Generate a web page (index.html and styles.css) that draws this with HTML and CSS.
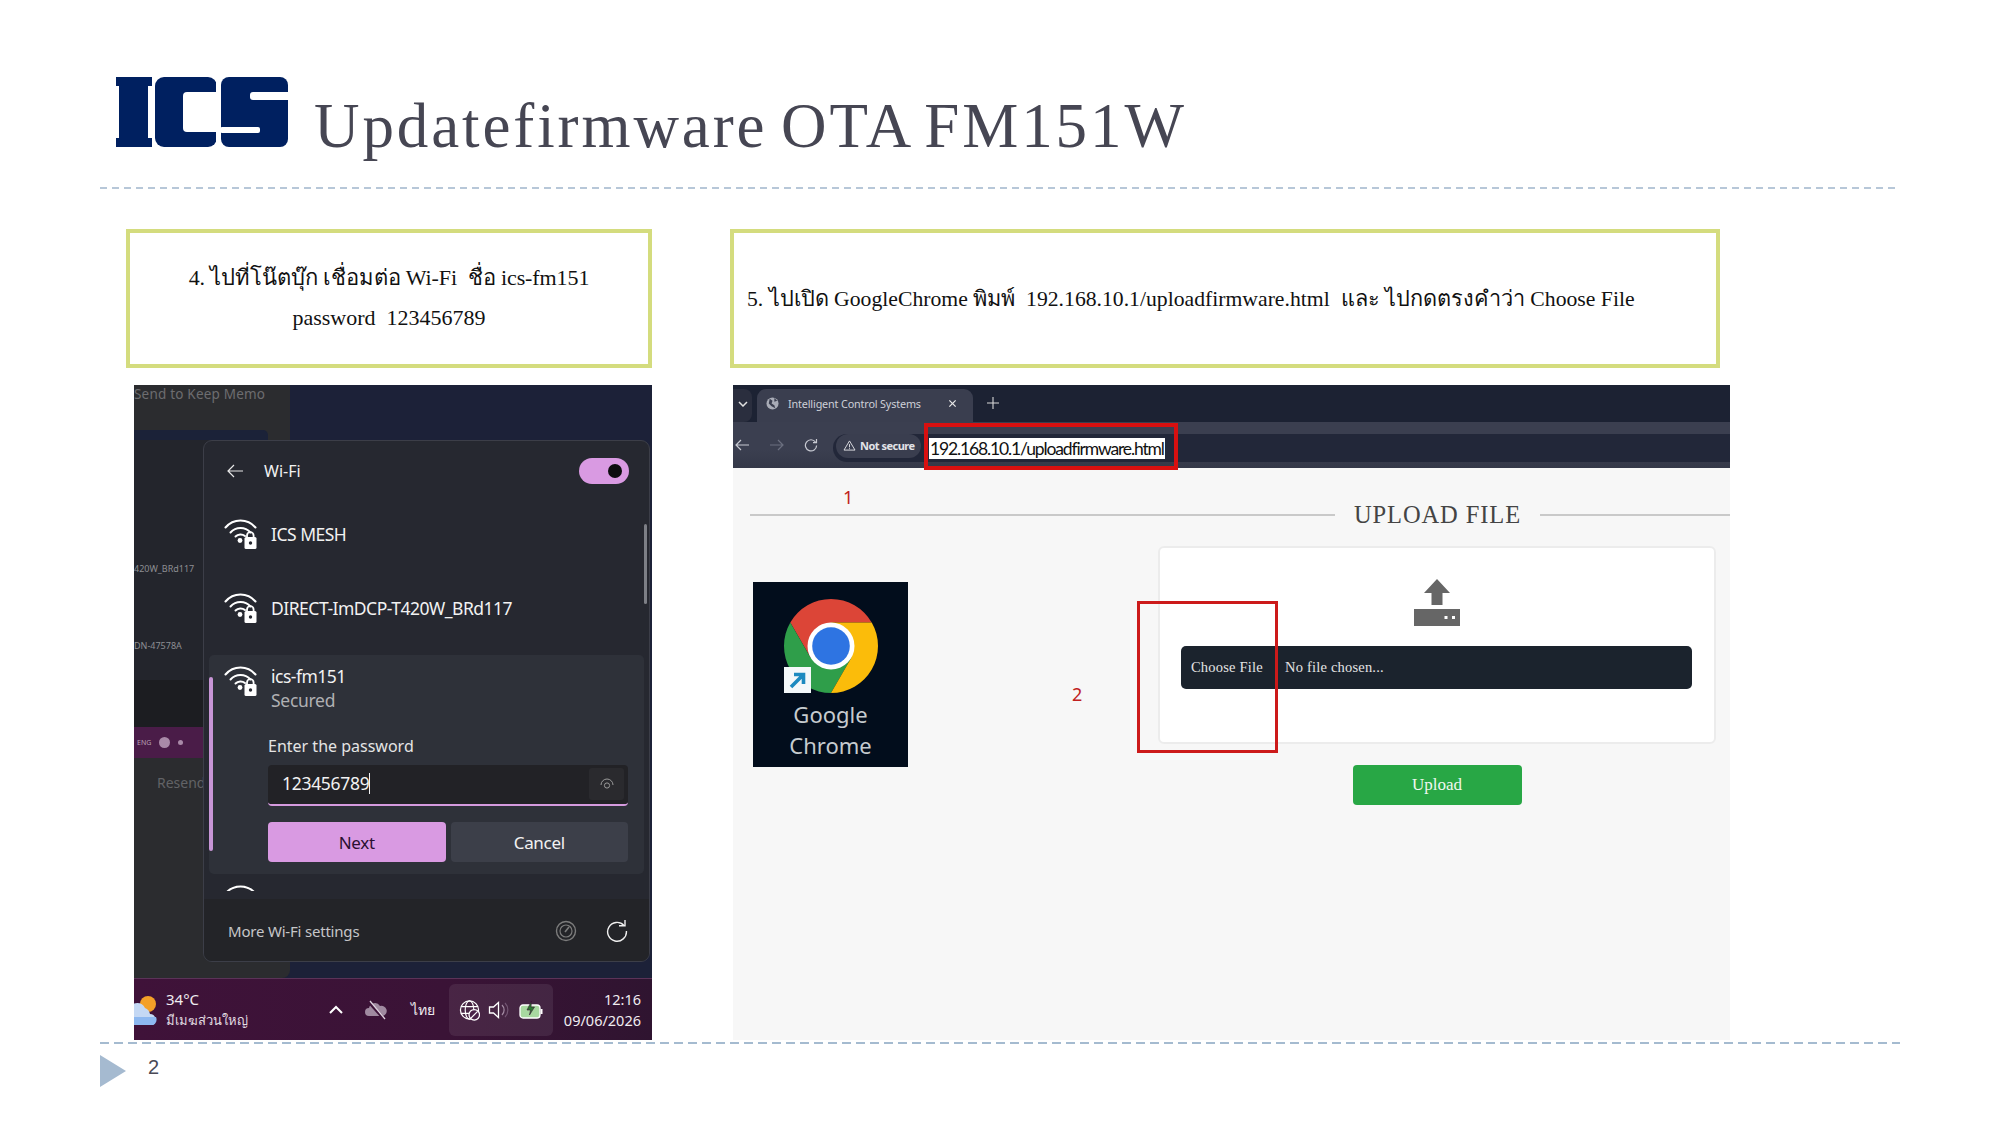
FILE: index.html
```html
<!DOCTYPE html>
<html lang="th">
<head>
  <meta charset="UTF-8" />
  <title>Updatefirmware OTA FM151W</title>
  <link rel="stylesheet" href="styles.css">
</head>
<body>
  <div class="slide">
    <div class="title-row">
      <svg class="logo" viewBox="0 0 172 70" role="img" aria-label="ICS logo">
        <rect x="0" y="0" width="36" height="9" fill="#002060"/>
        <rect x="3" y="5" width="29" height="60" fill="#002060"/>
        <rect x="0" y="61" width="36" height="9" fill="#002060"/>
        <rect x="39" y="0" width="62" height="70" rx="9" fill="#002060"/>
        <rect x="67" y="15" width="40" height="40" rx="4" fill="#fff"/>
        <rect x="105" y="0" width="67" height="70" rx="8" fill="#002060"/>
        <rect x="100" y="-1" width="5" height="72" fill="#fff"/>
        <rect x="134" y="15" width="40" height="8" rx="3" fill="#fff"/>
        <rect x="104" y="50" width="40" height="6" rx="2" fill="#fff"/>
      </svg>
      <h1 class="title">Updatefirmware OTA FM151W</h1>
    </div>
    <div class="rule rule-top"></div>

    <div class="columns">
      <section class="col-left">
        <div class="note note-left">
          <p>4. ไปที่โน๊ตบุ๊ก เชื่อมต่อ Wi-Fi &nbsp;ชื่อ ics-fm151</p>
          <p>password &nbsp;123456789</p>
        </div>

        <div class="shot shot-wifi">
          <div class="desk-side">
            <div class="memo">Send to Keep Memo<span class="memo-tab"></span></div>
            <div class="side-list">
              <span class="side-label side-label-a">420W_BRd117</span>
              <span class="side-label side-label-b">DN-47578A</span>
            </div>
            <div class="side-dark"></div>
            <div class="side-strip"><span class="side-eng">ENG</span><span class="side-dot"></span><span class="side-dot2"></span></div>
            <div class="side-resend">Resend</div>
          </div>

          <div class="wifi-panel">
            <div class="panel-head">
              <svg class="back" viewBox="0 0 16 14"><path d="M7 1 1 7l6 6M1 7h15" fill="none" stroke="#e8e8e8" stroke-width="1.2"/></svg>
              <span class="panel-title">Wi-Fi</span>
              <span class="toggle"><span class="knob"></span></span>
            </div>
            <span class="scroll-thumb"></span>

            <div class="net-row">
              <svg class="wifi-ico" viewBox="0 0 33 30"><use href="#wifi-lock"/></svg>
              <span class="net-name">ICS MESH</span>
            </div>
            <div class="net-row">
              <svg class="wifi-ico" viewBox="0 0 33 30"><use href="#wifi-lock"/></svg>
              <span class="net-name">DIRECT-ImDCP-T420W_BRd117</span>
            </div>

            <div class="net-open">
              <span class="accent"></span>
              <div class="net-open-head">
                <svg class="wifi-ico" viewBox="0 0 33 30"><use href="#wifi-lock"/></svg>
                <div>
                  <div class="net-name">ics-fm151</div>
                  <div class="net-sub">Secured</div>
                </div>
              </div>
              <div class="pw-block">
                <div class="pw-label">Enter the password</div>
                <div class="pw-input">
                  <span class="pw-value">123456789</span>
                  <span class="pw-eye">
                    <svg viewBox="0 0 14 12"><path d="M1 7a6 6 0 0 1 12 0" fill="none" stroke="#9a9a9a" stroke-width="1"/><circle cx="7" cy="7.5" r="2.6" fill="none" stroke="#9a9a9a" stroke-width="1"/></svg>
                  </span>
                </div>
                <div class="pw-buttons">
                  <span class="btn-next">Next</span>
                  <span class="btn-cancel">Cancel</span>
                </div>
              </div>
            </div>

            <div class="net-peek">
              <svg class="wifi-ico" viewBox="0 0 33 30"><use href="#wifi-lock"/></svg>
            </div>

            <div class="panel-foot">
              <span class="foot-link">More Wi-Fi settings</span>
              <svg class="gauge" viewBox="0 0 22 22"><circle cx="11" cy="11" r="9.5" fill="none" stroke="#7c7c7c" stroke-width="1.4"/><circle cx="11" cy="11" r="6" fill="none" stroke="#7c7c7c" stroke-width="1.2"/><path d="M10 12l4-5" stroke="#7c7c7c" stroke-width="1.6"/></svg>
              <svg class="refresh" viewBox="0 0 22 22"><path d="M18 5.5A9.4 9.4 0 1 0 20.4 11" fill="none" stroke="#f0f0f0" stroke-width="1.4"/><path d="M13 5.8h6V0" fill="none" stroke="#f0f0f0" stroke-width="1.4"/></svg>
            </div>
          </div>

          <div class="taskbar">
            <svg class="weather" viewBox="0 0 24 34"><circle cx="14" cy="11" r="8" fill="#f4a028"/><path d="M-6 32a7 7 0 0 1 0-14 9 9 0 0 1 17-3 8 8 0 0 1 5 6 6 6 0 0 1 3 11z" fill="#c4d8f4"/><path d="M-6 32h25a6 6 0 0 0 3-8H-6z" fill="#8db8f0"/></svg>
            <div class="weather-text">
              <div class="temp">34°C</div>
              <div class="sky">มีเมฆส่วนใหญ่</div>
            </div>
            <svg class="chev" viewBox="0 0 14 9"><path d="M1 8l6-6 6 6" fill="none" stroke="#fff" stroke-width="2"/></svg>
            <svg class="cloud-off" viewBox="0 0 22 20"><path d="M4 16a4 4 0 0 1 0-8 6 6 0 0 1 11-2 5 5 0 0 1 3 10z" fill="#a08aa0"/><path d="M3 1l16 18" stroke="#3d1238" stroke-width="3"/><path d="M5 1l15 18" stroke="#e0d4e0" stroke-width="1.3"/></svg>
            <span class="lang">ไทย</span>
            <div class="tray">
              <svg class="globe" viewBox="0 0 22 22"><circle cx="11" cy="11" r="9.5" fill="none" stroke="#fff" stroke-width="1.3"/><ellipse cx="11" cy="11" rx="4.5" ry="9.5" fill="none" stroke="#fff" stroke-width="1.2"/><path d="M2 7.5h18M2 14.5h12" stroke="#fff" stroke-width="1.2"/><circle cx="16" cy="16" r="5.5" fill="#4a2348" stroke="#fff" stroke-width="1.3"/><path d="M12.5 19.5l7-7" stroke="#fff" stroke-width="1.3"/></svg>
              <svg class="speaker" viewBox="0 0 22 20"><path d="M1.5 7v6h4l5 4.5v-15l-5 4.5z" fill="none" stroke="#fff" stroke-width="1.3"/><path d="M14 5a7 7 0 0 1 0 10" fill="none" stroke="#a48ca4" stroke-width="1.2"/><path d="M17 3a10 10 0 0 1 0 14" fill="none" stroke="#735673" stroke-width="1.2"/></svg>
              <svg class="battery" viewBox="0 0 24 18"><rect x="1" y="4" width="20" height="13" rx="3" fill="#a8d8a0" stroke="#fff" stroke-width="1.3"/><rect x="21.5" y="8" width="2" height="5" fill="#fff"/><path d="M12.5 0L8 9h3.5l-1 5 5-8H12z" fill="#2a7a30" stroke="#3d1238" stroke-width=".6"/></svg>
            </div>
            <div class="clock">
              <div>12:16</div>
              <div>09/06/2026</div>
            </div>
          </div>
        </div>
      </section>

      <section class="col-right">
        <div class="note note-right">
          <p>5. ไปเปิด GoogleChrome พิมพ์ &nbsp;192.168.10.1/uploadfirmware.html &nbsp;และ ไปกดตรงคำว่า Choose File</p>
        </div>

        <div class="shot shot-chrome">
          <div class="tabstrip">
            <span class="tab-list"><svg viewBox="0 0 10 6"><path d="M1 1l4 4 4-4" fill="none" stroke="#e0e0e0" stroke-width="1.5"/></svg></span>
            <div class="tab">
              <svg class="tab-globe" viewBox="0 0 14 14"><circle cx="7" cy="7" r="6.5" fill="#a8abb6"/><path d="M4 2l3 2-1 3 3 2 1 3-4-2-3-3zM9 1l3 3-3 1z" fill="#3a3e4f"/></svg>
              <span class="tab-title">Intelligent Control Systems</span>
              <svg class="tab-x" viewBox="0 0 10 10"><path d="M1.5 1.5l7 7M8.5 1.5l-7 7" stroke="#e8e8e8" stroke-width="1.4"/></svg>
            </div>
            <svg class="tab-new" viewBox="0 0 12 12"><path d="M6 0v12M0 6h12" stroke="#d8d8d8" stroke-width="1.1"/></svg>
          </div>
          <div class="toolbar">
            <svg class="nav nav-back" viewBox="0 0 14 12"><path d="M6 1L1 6l5 5M1 6h13" fill="none" stroke="#c8cad2" stroke-width="1.2"/></svg>
            <svg class="nav nav-fwd" viewBox="0 0 14 12"><path d="M8 1l5 5-5 5M13 6H0" fill="none" stroke="#6c7080" stroke-width="1.2"/></svg>
            <svg class="nav nav-reload" viewBox="0 0 14 14"><path d="M11.5 4A5.6 5.6 0 1 0 12.6 7.5" fill="none" stroke="#c8cad2" stroke-width="1.2"/><path d="M12.5 1v3.6H9" fill="none" stroke="#c8cad2" stroke-width="1.2"/></svg>
            <div class="omnibox">
              <span class="chip"><svg viewBox="0 0 14 12"><path d="M7 1l6 10H1zM7 4.5v3.5M7 9v1" fill="none" stroke="#e4e4e8" stroke-width="1"/></svg>Not secure</span>
              <span class="url">192.168.10.1/uploadfirmware.html</span>
            </div>
          </div>
          <div class="page">
            <div class="page-head">
              <span class="page-line"></span>
              <h2>UPLOAD FILE</h2>
              <span class="page-line page-line-end"></span>
            </div>
            <div class="page-body">
              <div class="chrome-tile">
                <svg class="chrome-logo" viewBox="0 0 100 100">
                  <path d="M93.3 25A50 50 0 0 0 6.7 25L28.35 62.5 50 25z" fill="#dc4537"/>
                  <path d="M6.7 25A50 50 0 0 0 50 100L71.65 62.5H28.35z" fill="#2f9e4a"/>
                  <path d="M50 100A50 50 0 0 0 93.3 25H50L71.65 62.5z" fill="#fbbc0a"/>
                  <circle cx="50" cy="50" r="25" fill="#fff"/>
                  <circle cx="50" cy="50" r="20" fill="#2e74e2"/>
                </svg>
                <span class="shortcut"><svg viewBox="0 0 27 26"><rect width="27" height="26" fill="#f4f8fa"/><path d="M7 20L18 9M10 7.500h9.500V17" fill="none" stroke="#1d8ac0" stroke-width="3.600"/></svg></span>
                <div class="tile-label">Google<br>Chrome</div>
              </div>
              <div class="upload-col">
                <div class="upload-card">
                  <svg class="upload-ico" viewBox="0 0 46 47"><path d="M23 0l13 14h-7.500v12h-11V14H10z" fill="#666"/><rect x="0" y="30" width="46" height="17" fill="#666"/><rect x="30.500" y="37" width="3" height="3" fill="#fff"/><rect x="38" y="37" width="3" height="3" fill="#fff"/></svg>
                  <div class="file-input"><span class="file-btn">Choose File</span><span class="file-name">No file chosen...</span></div>
                </div>
                <div class="upload-btn">Upload</div>
              </div>
            </div>
          </div>

          <span class="step-num step-one">1</span>
          <span class="step-num step-two">2</span>
          <span class="mark mark-url"></span>
          <span class="mark mark-file"></span>
        </div>
      </section>
    </div>

    <div class="rule rule-bottom"></div>
    <div class="foot">
      <span class="foot-arrow"></span>
      <span class="page-no">2</span>
    </div>
  </div>

  <svg class="defs" width="0" height="0">
    <symbol id="wifi-lock" viewBox="0 0 33 30">
      <g fill="none" stroke="#fff" stroke-width="2" stroke-linecap="round">
        <path d="M1.500 8.500A19.500 19.500 0 0 1 31.500 8.500"/>
        <path d="M6.500 13.500A13.500 13.500 0 0 1 26.500 13.500"/>
        <path d="M11.500 17.500A7 7 0 0 1 21 17"/>
      </g>
      <circle cx="16" cy="21.500" r="2.400" fill="#fff"/>
      <path d="M23 18v-1.500a3.300 3.300 0 0 1 6.600 0V18" fill="none" stroke="#fff" stroke-width="1.800"/>
      <rect x="20.500" y="18" width="12" height="12" rx="1.500" fill="#fff"/>
      <circle cx="26.500" cy="24" r="1.700" fill="#262830"/>
    </symbol>
  </svg>
</body>
</html>
```

FILE: styles.css
```css
* {
  box-sizing: border-box;
}
body {
  margin: 0;
  background: #fff;
  font-family: "Liberation Serif", "Noto Sans CJK SC", serif;
}
.defs {
  position: absolute;
}
.slide {
  width: 2000px;
  height: 1125px;
  overflow: hidden;
}

/* header */
.title-row {
  display: flex;
  align-items: flex-start;
  height: 187px;
  padding: 77px 0 0 116px;
}
.logo {
  width: 172px;
  height: 70px;
  flex: none;
}
.title {
  margin: 14px 0 0 26px;
  font-size: 63px;
  line-height: 70px;
  font-weight: 400;
  letter-spacing: 2.9px;
  word-spacing: -5px;
  color: #464653;
  white-space: nowrap;
}
.rule {
  margin: 0 100px;
  height: 2px;
}
.rule-top {
  background: repeating-linear-gradient(90deg, #b7c7d8 0 7px, transparent 7px 12px);
}
.rule-bottom {
  background: repeating-linear-gradient(90deg, #a5bbd0 0 9px, transparent 9px 14px);
}

/* two steps */
.columns {
  display: flex;
  height: 853px;
  padding: 40px 0 0 126px;
}
.col-left {
  width: 526px;
}
.col-right {
  width: 1000px;
  margin-left: 78px;
}
.note {
  height: 139px;
  border: 4px solid #d4dc7e;
  color: #111;
}
.note p {
  margin: 0;
}
.note-left {
  padding-top: 25px;
  font-size: 22px;
  text-align: center;
  line-height: 40px;
}
.note-left p:first-child {
  letter-spacing: -0.1px;
}
.note-right {
  width: 990px;
  padding: 0 0 0 13px;
  font-size: 21.700px;
  display: flex;
  align-items: center;
  white-space: nowrap;
}
.shot {
  position: relative;
  height: 655px;
  margin-top: 17px;
  overflow: hidden;
}

/* wifi screenshot */
.shot-wifi {
  width: 518px;
  margin-left: 8px;
  background: #1c2138;
  font-family: "Noto Sans", sans-serif;
}
.desk-side {
  width: 156px;
  height: 593px;
  display: flex;
  flex-direction: column;
  background: #2b2c2f;
  border-bottom-right-radius: 8px;
  color: #6d6d70;
}
.memo {
  position: relative;
  height: 55px;
  font-size: 13.500px;
  letter-spacing: 0.2px;
  line-height: 19px;
  white-space: nowrap;
}
.memo-tab {
  position: absolute;
  left: 0;
  top: 45px;
  width: 134px;
  height: 10px;
  background: #1b2238;
  border-top-right-radius: 5px;
}
.side-list {
  height: 240px;
  background: #23252c;
  font-size: 9px;
  color: #8d8e92;
  display: flex;
  flex-direction: column;
}
.side-label-a {
  margin-top: 122px;
}
.side-label-b {
  margin-top: 64px;
}
.side-dark {
  height: 47px;
  background: #1c1d21;
}
.side-strip {
  height: 31px;
  background: #4a1c48;
  display: flex;
  align-items: center;
  padding-left: 3px;
  gap: 8px;
  font-size: 7px;
  color: #b7a0b5;
}
.side-dot {
  width: 11px;
  height: 11px;
  border-radius: 50%;
  background: #a98aa8;
}
.side-dot2 {
  width: 5px;
  height: 5px;
  border-radius: 50%;
  background: #a98aa8;
}
.side-resend {
  padding: 15px 0 0 23px;
  font-size: 14px;
  color: #626366;
}
.wifi-panel {
  position: absolute;
  left: 69px;
  top: 55px;
  width: 447px;
  height: 522px;
  background: #262830;
  border: 1px solid #3c3e48;
  border-radius: 9px;
  overflow: hidden;
  display: flex;
  flex-direction: column;
  color: #f2f2f2;
}
.panel-head {
  display: flex;
  align-items: center;
  height: 56px;
  padding: 4px 20px 0 23px;
  flex: none;
}
.back {
  width: 16px;
  height: 14px;
}
.panel-title {
  margin-left: 21px;
  font-size: 16px;
}
.toggle {
  margin-left: auto;
  width: 50px;
  height: 26px;
  border-radius: 13px;
  background: #d99ae2;
  display: flex;
  align-items: center;
  justify-content: flex-end;
  padding-right: 7px;
}
.knob {
  width: 14px;
  height: 14px;
  border-radius: 50%;
  background: #0c0c0e;
}
.scroll-thumb {
  position: absolute;
  left: 440px;
  top: 83px;
  width: 3px;
  height: 80px;
  border-radius: 2px;
  background: #7d7f86;
}
.net-row {
  display: flex;
  align-items: center;
  gap: 14px;
  height: 74px;
  padding-left: 20px;
  flex: none;
}
.wifi-ico {
  width: 33px;
  height: 30px;
  flex: none;
}
.net-name {
  font-size: 17.500px;
  line-height: 24px;
  letter-spacing: -0.5px;
  white-space: nowrap;
}
.net-sub {
  font-size: 17.500px;
  line-height: 24px;
  letter-spacing: -0.3px;
  color: #b0b0b3;
}
.net-open {
  position: relative;
  flex: none;
  height: 219px;
  margin: 10px 5px 0;
  padding: 9px 0 0 15px;
  background: #2e3139;
  border-radius: 5px;
}
.accent {
  position: absolute;
  left: 0;
  top: 22px;
  width: 4px;
  height: 174px;
  border-radius: 2px;
  background: #c795d6;
}
.net-open-head {
  display: flex;
  gap: 14px;
}
.net-open-head .wifi-ico {
  margin-top: 2px;
}
.pw-block {
  margin: 23px 16px 0 44px;
}
.pw-label {
  font-size: 16px;
  line-height: 22px;
  color: #e4e4e4;
}
.pw-input {
  display: flex;
  align-items: center;
  justify-content: space-between;
  height: 41px;
  margin-top: 8px;
  padding: 0 4px 2px 14px;
  background: #222226;
  border-bottom: 2px solid #d59ade;
  border-radius: 4px;
}
.pw-value {
  border-right: 1px solid #f2f2f2;
  font-size: 17.500px;
  line-height: 21px;
  letter-spacing: -0.3px;
}
.pw-eye {
  display: flex;
  align-items: center;
  justify-content: center;
  width: 35px;
  height: 32px;
  background: #2a2a2e;
  border-radius: 3px;
}
.pw-eye svg {
  width: 14px;
  height: 12px;
}
.pw-buttons {
  display: flex;
  gap: 5px;
  margin-top: 16px;
}
.btn-next,
.btn-cancel {
  display: flex;
  align-items: center;
  justify-content: center;
  height: 40px;
  width: 178px;
  border-radius: 4px;
  font-size: 17px;
  letter-spacing: -0.3px;
}
.btn-next {
  background: #d99ae2;
  color: #2a1030;
}
.btn-cancel {
  background: #3c3f49;
}
.net-peek {
  height: 17px;
  padding: 11px 0 0 20px;
  flex: none;
  overflow: hidden;
}
.panel-foot {
  display: flex;
  align-items: center;
  height: 64px;
  margin-top: 8px;
  padding: 0 21px 0 24px;
  background: #232428;
  flex: none;
}
.foot-link {
  font-size: 15px;
  letter-spacing: -0.2px;
  color: #c6c6c8;
}
.gauge {
  margin-left: auto;
  width: 22px;
  height: 22px;
}
.refresh {
  margin-left: 29px;
  width: 22px;
  height: 22px;
}
.taskbar {
  position: absolute;
  left: 0;
  right: 0;
  bottom: 0;
  height: 62px;
  display: flex;
  align-items: center;
  background: linear-gradient(90deg, #3f1239, #3a1336 60%, #2f1430);
  border-top: 1px solid #5b3358;
  color: #f0ecf0;
}
.weather {
  width: 24px;
  height: 34px;
  flex: none;
}
.weather-text {
  margin-left: 8px;
  width: 142px;
}
.temp {
  font-size: 15px;
  line-height: 21px;
}
.sky {
  font-size: 13px;
  line-height: 21px;
  color: #e2dce2;
  white-space: nowrap;
}
.chev {
  width: 14px;
  height: 9px;
  margin-left: 21px;
  flex: none;
}
.cloud-off {
  width: 22px;
  height: 20px;
  margin-left: 22px;
  flex: none;
}
.lang {
  margin-left: 24px;
  width: 24px;
  font-size: 14px;
  flex: none;
}
.tray {
  display: flex;
  align-items: center;
  width: 104px;
  height: 52px;
  margin-left: 14px;
  padding-left: 10px;
  background: rgba(255, 255, 255, 0.08);
  border-radius: 6px;
  flex: none;
}
.globe {
  width: 21px;
  height: 22px;
}
.speaker {
  width: 22px;
  height: 20px;
  margin-left: 8px;
}
.battery {
  width: 24px;
  height: 18px;
  margin-left: 9px;
}
.clock {
  margin-left: auto;
  padding-right: 11px;
  text-align: right;
  font-size: 14.500px;
  line-height: 21px;
}

/* chrome screenshot */
.shot-chrome {
  width: 997px;
  margin-left: 3px;
  display: flex;
  flex-direction: column;
  font-family: "Noto Sans", sans-serif;
}
.tabstrip {
  display: flex;
  align-items: flex-end;
  height: 37px;
  background: #1c2233;
  flex: none;
}
.tab-list {
  display: flex;
  align-items: center;
  justify-content: center;
  width: 19px;
  height: 33px;
  padding-bottom: 4px;
  background: #2a2e3e;
  border-radius: 0 8px 8px 0;
}
.tab-list svg {
  width: 10px;
  height: 6px;
}
.tab {
  display: flex;
  align-items: center;
  width: 216px;
  height: 33px;
  margin-left: 5px;
  padding: 0 10px 4px 9px;
  background: #3a3e4f;
  border-radius: 9px 9px 0 0;
}
.tab-globe {
  width: 13px;
  height: 13px;
}
.tab-title {
  margin-left: 9px;
  font-size: 10.800px;
  letter-spacing: -0.15px;
  color: #ced0d8;
  white-space: nowrap;
}
.tab-x {
  margin-left: auto;
  margin-right: 6px;
  width: 9px;
  height: 9px;
}
.tab-new {
  width: 12px;
  height: 12px;
  margin: 0 0 13px 14px;
}
.toolbar {
  display: flex;
  align-items: center;
  height: 46px;
  padding: 5px 0 0;
  background: linear-gradient(#3b3f50 0 60%, #343848);
  flex: none;
}
.nav {
  width: 14px;
  height: 12px;
  margin-top: -6px;
  flex: none;
}
.nav-back {
  margin-left: 2px;
}
.nav-fwd {
  margin-left: 21px;
}
.nav-reload {
  margin-left: 20px;
  height: 14px;
}
.omnibox {
  display: flex;
  align-items: center;
  flex: 1;
  height: 28px;
  margin-left: 15px;
  padding-left: 3px;
  background: #222739;
  border-radius: 14px 0 0 14px;
}
.chip {
  display: flex;
  align-items: center;
  gap: 4px;
  width: 85px;
  height: 24px;
  margin-top: -4px;
  padding-left: 7px;
  background: #3a3e4f;
  border-radius: 12px;
  font-size: 11px;
  font-weight: 700;
  letter-spacing: -0.5px;
  color: #e2e3e8;
  white-space: nowrap;
}
.chip svg {
  width: 13px;
  height: 11px;
  flex: none;
}
.url {
  margin: 2px 0 0 8px;
  padding: 0 1px;
  background: #fff;
  color: #111;
  font-family: Lato, sans-serif;
  font-size: 17.500px;
  letter-spacing: -1.15px;
  line-height: 21px;
  white-space: nowrap;
}
.page {
  flex: 1;
  background: #f7f7f7;
}
.page-head {
  display: flex;
  align-items: center;
  gap: 19px;
  height: 32px;
  margin-top: 31px;
  padding-left: 17px;
}
.page-head h2 {
  margin: 0;
  font-family: "Liberation Serif", serif;
  font-size: 24.500px;
  font-weight: 400;
  letter-spacing: 0.9px;
  color: #444;
  white-space: nowrap;
}
.page-line {
  flex: 1;
  height: 2px;
  background: #c9c9c9;
}
.page-line-end {
  flex: none;
  width: 190px;
}
.page-body {
  display: flex;
  align-items: flex-start;
  padding: 15px 0 0 20px;
}
.chrome-tile {
  position: relative;
  width: 155px;
  height: 185px;
  margin-top: 36px;
  padding-top: 17px;
  background: #020d1c;
  text-align: center;
}
.chrome-logo {
  display: block;
  width: 94px;
  height: 94px;
  margin: 0 auto;
}
.shortcut {
  position: absolute;
  left: 31px;
  top: 85px;
  width: 27px;
  height: 26px;
}
.tile-label {
  margin-top: 6px;
  font-size: 22px;
  line-height: 31px;
  color: #c6cbcf;
}
.upload-col {
  display: flex;
  flex-direction: column;
  align-items: center;
  width: 558px;
  margin-left: 250px;
}
.upload-card {
  width: 100%;
  height: 198px;
  padding: 31px 21px 0;
  background: #fff;
  border: 2px solid #ececec;
  border-radius: 6px;
  text-align: center;
}
.upload-ico {
  display: block;
  width: 46px;
  height: 47px;
  margin: 0 auto;
}
.file-input {
  display: flex;
  align-items: center;
  width: 511px;
  height: 43px;
  margin-top: 20px;
  background: #1b232d;
  border-radius: 5px;
  font-family: "Liberation Serif", serif;
  font-size: 14.500px;
  letter-spacing: 0.2px;
  color: #e4e4e4;
  text-align: left;
}
.file-btn {
  width: 104px;
  padding-left: 10px;
}
.upload-btn {
  display: flex;
  align-items: center;
  justify-content: center;
  width: 169px;
  height: 40px;
  margin-top: 21px;
  background: #28a745;
  border-radius: 4px;
  font-family: "Liberation Serif", serif;
  font-size: 17px;
  color: #f0f8f0;
}

/* red annotations on top of the screenshot */
.step-num {
  position: absolute;
  font-size: 18px;
  line-height: 20px;
  color: #c02020;
}
.step-one {
  left: 110px;
  top: 102px;
}
.step-two {
  left: 339px;
  top: 299px;
}
.mark {
  position: absolute;
}
.mark-url {
  left: 191px;
  top: 38px;
  width: 254px;
  height: 47px;
  border: 4px solid #d81010;
}
.mark-file {
  left: 404px;
  top: 216px;
  width: 141px;
  height: 152px;
  border: 3px solid #cc1a1a;
}

/* footer */
.foot {
  display: flex;
  align-items: flex-start;
  padding: 11px 0 0 100px;
}
.foot-arrow {
  width: 0;
  height: 0;
  border-left: 26px solid #a5bad0;
  border-top: 16px solid transparent;
  border-bottom: 16px solid transparent;
}
.page-no {
  margin-left: 22px;
  font-family: "Liberation Sans", sans-serif;
  font-size: 20px;
  line-height: 24px;
  color: #4a4a56;
}
```
